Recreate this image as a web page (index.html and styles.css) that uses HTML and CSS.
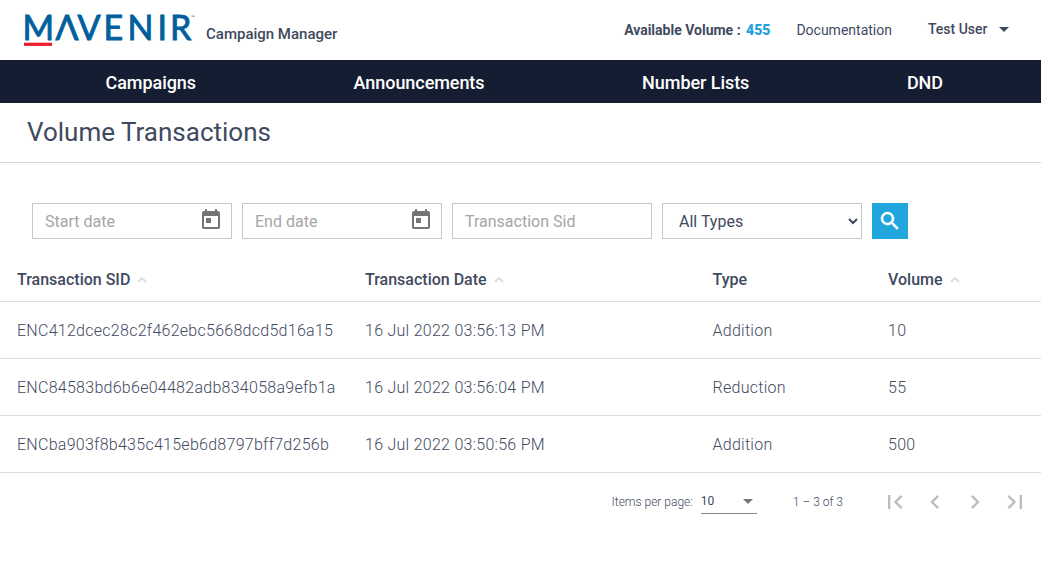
FILE: index.html
```html
<!DOCTYPE html>
<html lang="en">
<head>
<meta charset="utf-8">
<title>Campaign Manager</title>
<link rel="stylesheet" href="styles.css">
</head>
<body>
<header class="top">
  <svg class="logo" width="172" height="36" viewBox="0 0 172 36" role="img" aria-label="Mavenir">
    <text class="logo-word" y="27.500" x="-1.5 31.500 53.500 79.500 103.500 133.500 146">MΛVENIR</text>
    <text class="logo-tm" x="167" y="7">™</text>
    <rect x="0" y="30.700" width="28" height="3.200" fill="#ee1c2e"/>
  </svg>
  <span class="product">Campaign Manager</span>
  <div class="account">
    <span class="available">Available Volume : <b class="count">455</b></span>
    <a class="docs">Documentation</a>
    <span class="user">Test User <i class="caret"></i></span>
  </div>
</header>
<nav class="nav"><a>Campaigns</a><a>Announcements</a><a>Number Lists</a><a>DND</a></nav>
<h1 class="title">Volume Transactions</h1>
<form class="filters">
  <label class="field"><input class="input" placeholder="Start date">
    <svg class="calendar" width="24" height="24" viewBox="0 0 24 24"><path d="M19 3h-1V1h-2v2H8V1H6v2H5c-1.110 0-2 .9-2 2v14c0 1.100.89 2 2 2h14c1.100 0 2-.9 2-2V5c0-1.100-.9-2-2-2zm0 16H5V8h14v11zM7 10h5v5H7z"/></svg></label>
  <label class="field"><input class="input" placeholder="End date">
    <svg class="calendar" width="24" height="24" viewBox="0 0 24 24"><path d="M19 3h-1V1h-2v2H8V1H6v2H5c-1.110 0-2 .9-2 2v14c0 1.100.89 2 2 2h14c1.100 0 2-.9 2-2V5c0-1.100-.9-2-2-2zm0 16H5V8h14v11zM7 10h5v5H7z"/></svg></label>
  <label class="field"><input class="input" placeholder="Transaction Sid"></label>
  <select class="field select"><option>All Types</option></select>
  <button class="search" type="button" aria-label="Search"><svg width="24" height="24" viewBox="0 0 24 24"><path d="M15.500 14h-.79l-.28-.27A6.471 6.471 0 0 0 16 9.500 6.500 6.500 0 1 0 9.500 16c1.610 0 3.090-.59 4.230-1.570l.27.28v.79l5 4.990L20.490 19l-4.990-5zm-6 0C7.010 14 5 11.990 5 9.500S7.010 5 9.500 5 14 7.010 14 9.500 11.990 14 9.500 14z"/></svg></button>
</form>
<table class="table">
  <colgroup><col class="c-sid"><col class="c-date"><col class="c-type"><col class="c-volume"></colgroup>
  <thead><tr>
    <th>Transaction SID<svg class="sort" width="10" height="6" viewBox="0 0 10 6"><path d="M1 5l4-4 4 4"/></svg></th>
    <th>Transaction Date<svg class="sort" width="10" height="6" viewBox="0 0 10 6"><path d="M1 5l4-4 4 4"/></svg></th>
    <th>Type</th>
    <th>Volume<svg class="sort" width="10" height="6" viewBox="0 0 10 6"><path d="M1 5l4-4 4 4"/></svg></th>
  </tr></thead>
  <tbody>
    <tr><td>ENC412dcec28c2f462ebc5668dcd5d16a15</td><td>16 Jul 2022 03:56:13 PM</td><td>Addition</td><td>10</td></tr>
    <tr><td>ENC84583bd6b6e04482adb834058a9efb1a</td><td>16 Jul 2022 03:56:04 PM</td><td>Reduction</td><td>55</td></tr>
    <tr><td>ENCba903f8b435c415eb6d8797bff7d256b</td><td>16 Jul 2022 03:50:56 PM</td><td>Addition</td><td>500</td></tr>
  </tbody>
</table>
<footer class="pager">
  <span class="per-page">Items per page:</span>
  <span class="size">10 <i class="caret grey"></i></span>
  <span class="range">1 – 3 of 3</span>
  <svg class="page" width="28" height="28" viewBox="0 0 24 24"><path d="M18.410 16.590L13.820 12l4.590-4.590L17 6l-6 6 6 6zM6 6h2v12H6z"/></svg>
  <svg class="page" width="28" height="28" viewBox="0 0 24 24"><path d="M15.410 7.410L14 6l-6 6 6 6 1.410-1.410L10.830 12z"/></svg>
  <svg class="page" width="28" height="28" viewBox="0 0 24 24"><path d="M10 6L8.590 7.410 13.170 12l-4.580 4.590L10 18l6-6z"/></svg>
  <svg class="page" width="28" height="28" viewBox="0 0 24 24"><path d="M5.590 7.410L10.180 12l-4.590 4.590L7 18l6-6-6-6zM16 6h2v12h-2z"/></svg>
</footer>
</body>
</html>
```
FILE: styles.css
```css
* { box-sizing: border-box; }
body { margin: 0; background: #fff; color: #3f4a5f; font-family: Roboto, sans-serif; font-size: 16px; }
.top { display: flex; height: 60px; padding: 12px 32.500px 0 24px; align-items: flex-start; }
.logo { flex: none; overflow: visible; }
.logo-word { font: 400 34px Lato, sans-serif; fill: #005f9e; stroke: #005f9e; stroke-width: .9; }
.logo-tm { font: 5px Lato, sans-serif; fill: #005f9e; }
.product { margin: 13px 0 0 10px; font-size: 15px; line-height: 18px; font-weight: 500; }
.account { display: flex; margin-left: auto; font-size: 14px; line-height: 18px; padding-top: 9px; }
.available { font-weight: 700; }
.count { color: #26a0da; margin-left: 2px; }
.docs { margin-left: 26px; }
.user { display: flex; align-items: center; margin-left: 36px; font-weight: 500; position: relative; top: -1px; }
.caret { margin-left: 11px; border: 5px solid transparent; border-top-color: currentColor; border-bottom: 0; }
.nav { display: flex; justify-content: space-between; height: 43px; padding: 0 98px 0 105.500px; background: #151d33; color: #fff; font-size: 18px; line-height: 46px; font-weight: 500; letter-spacing: -.06px; }
.title { height: 60px; margin: 0; padding: 0 27px; border-bottom: 1px solid #d4d4d4; font-size: 26px; line-height: 58px; font-weight: 400; }
.filters { display: flex; gap: 10px; padding: 40px 32px 0; }
.field { display: flex; align-items: center; width: 200px; height: 36px; border: 1px solid #c8c8c8; border-radius: 0; background: #fff; }
.input { flex: 1; min-width: 0; height: 34px; padding: 1px 0 0 12px; border: 0; background: none; font: 16px Roboto, sans-serif; }
.input::placeholder { color: #a5a5a5; }
.calendar { margin: 0 8px 2px 0; fill: #757575; }
.select { padding: 0 0 0 12px; color: #3f4a5f; font: 16px Roboto, sans-serif; }
.search { display: flex; align-items: center; justify-content: center; width: 36px; height: 36px; padding: 0; border: 0; background: #20a6dd; fill: #fff; stroke: #fff; stroke-width: .6; }
.table { width: 100%; margin-top: 18px; border-collapse: separate; border-spacing: 0; table-layout: fixed; }
.c-sid { width: 348px; }
.c-date { width: 347.500px; }
.c-type { width: 175.500px; }
th, td { padding: 0 0 0 17px; text-align: left; border-bottom: 1px solid #dedede; white-space: nowrap; }
th { height: 45px; font-weight: 500; }
td { height: 57px; font-weight: 300; letter-spacing: .27px; }
.sort { margin-left: 7px; vertical-align: 2px; fill: none; stroke: #ddd; stroke-width: 2; }
.pager { display: flex; align-items: center; justify-content: flex-end; height: 57px; padding-right: 12px; font-size: 12px; font-weight: 300; }
.size { display: flex; align-items: center; justify-content: space-between; width: 56px; height: 24px; margin: 0 36px 0 8px; padding-right: 4px; border-bottom: 1px solid #888; font-weight: 400; }
.range { margin-right: 38px; }
.grey { color: #757575; }
.page { margin-right: 12px; fill: #bdbdbd; }
.page:last-child { margin-right: 0; }
```
